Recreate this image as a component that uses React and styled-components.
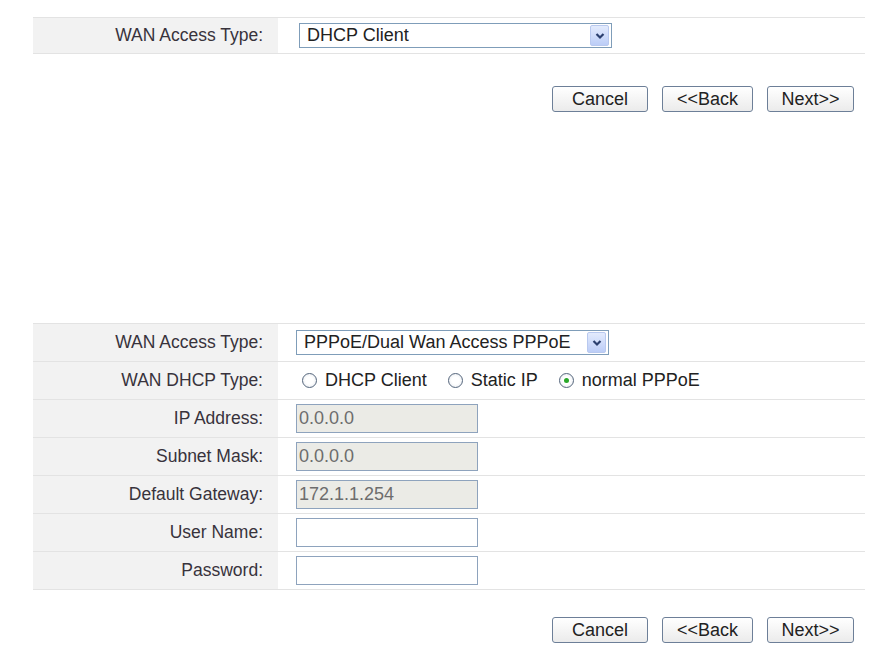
import React from 'react';
import styled, { createGlobalStyle } from 'styled-components';

const GlobalStyle = createGlobalStyle`
  body {
    margin: 0;
    background: #ffffff;
    font-family: "Liberation Sans", Arial, sans-serif;
    color: #333333;
  }
`;

const Page = styled.div`
  width: 890px;
  height: 646px;
  padding: 17px 25px 0 33px;
  box-sizing: border-box;
  display: flex;
  flex-direction: column;
`;

const FormTable = styled.div`
  display: flex;
  flex-direction: column;
  border-top: 1px solid #e3e3e3;
  margin-top: ${(p) => p.offset || 0}px;
`;

const Row = styled.div`
  display: grid;
  grid-template-columns: 245px 1fr;
  height: ${(p) => p.height || 37}px;
  border-bottom: 1px solid #e3e3e3;
`;

const Label = styled.div`
  background: #f2f2f2;
  display: flex;
  align-items: center;
  justify-content: flex-end;
  padding-right: 15px;
  font-size: 17.5px;
  color: #38333c;
`;

const Value = styled.div`
  display: flex;
  align-items: center;
  padding-left: ${(p) => p.indent || 18}px;
  gap: 21px;
  font-size: 18px;
`;

const Select = styled.div`
  width: ${(p) => p.width}px;
  height: 25px;
  box-sizing: border-box;
  border: 1px solid #7f9db9;
  background: #ffffff;
  display: flex;
  align-items: center;
  justify-content: space-between;
  padding: 0 2px 0 7px;
  font-size: 18px;
  color: #222222;
`;

const DropButton = styled.span`
  width: 19px;
  height: 21px;
  box-sizing: border-box;
  border: 1px solid #b9c9ef;
  border-radius: 2px;
  background: linear-gradient(#e3ebfd, #bccdf7);
  display: flex;
  align-items: center;
  justify-content: center;
`;

const Field = styled.div`
  width: 182px;
  height: 29px;
  box-sizing: border-box;
  border: 1px solid #8ea3bd;
  background: ${(p) => (p.disabled ? '#ebebe6' : '#ffffff')};
  color: #6d6d6d;
  font-size: 18px;
  display: flex;
  align-items: center;
  padding-left: 2px;
`;

const RadioOption = styled.label`
  display: flex;
  align-items: center;
  gap: 8px;
  font-size: 18px;
  color: #222222;
`;

const RadioMark = styled.span`
  width: 15px;
  height: 15px;
  box-sizing: border-box;
  border-radius: 50%;
  border: 1px solid #55667c;
  background: radial-gradient(circle, #ffffff 40%, #e2e6ec 100%);
  display: flex;
  align-items: center;
  justify-content: center;

  &::after {
    content: '';
    width: 5px;
    height: 5px;
    border-radius: 50%;
    background: ${(p) => (p.checked ? '#2aa82a' : 'transparent')};
  }
`;

const ButtonBar = styled.div`
  display: flex;
  justify-content: flex-end;
  gap: 14px;
  padding-right: 11px;
  margin-top: ${(p) => p.offset || 0}px;
`;

const Button = styled.button`
  height: 26px;
  width: ${(p) => p.width}px;
  box-sizing: border-box;
  border: 1px solid #6d7f98;
  border-radius: 3px;
  background: linear-gradient(#ffffff, #ebebeb);
  font-family: "Liberation Sans", Arial, sans-serif;
  font-size: 18px;
  color: #222222;
  padding: 0;
`;

const Chevron = () => (
  <svg width="10" height="8" viewBox="0 0 10 8">
    <path d="M1.5 2 L5 5.5 L8.5 2" fill="none" stroke="#2b3f6e" strokeWidth="2.2" />
  </svg>
);

const Buttons = ({ offset }) => (
  <ButtonBar offset={offset}>
    <Button width={96}>Cancel</Button>
    <Button width={91}>&lt;&lt;Back</Button>
    <Button width={87}>Next&gt;&gt;</Button>
  </ButtonBar>
);

const App = () => {
  const fields = [
    { label: 'IP Address:', value: '0.0.0.0', disabled: true },
    { label: 'Subnet Mask:', value: '0.0.0.0', disabled: true },
    { label: 'Default Gateway:', value: '172.1.1.254', disabled: true },
    { label: 'User Name:', value: '', disabled: false },
    { label: 'Password:', value: '', disabled: false },
  ];

  return (
    <Page>
      <GlobalStyle />
      <FormTable>
        <Row height={35}>
          <Label>WAN Access Type:</Label>
          <Value indent={21}>
            <Select width={313}>
              DHCP Client
              <DropButton><Chevron /></DropButton>
            </Select>
          </Value>
        </Row>
      </FormTable>
      <Buttons offset={32} />

      <FormTable offset={211}>
        <Row>
          <Label>WAN Access Type:</Label>
          <Value>
            <Select width={313}>
              PPPoE/Dual Wan Access PPPoE
              <DropButton><Chevron /></DropButton>
            </Select>
          </Value>
        </Row>
        <Row>
          <Label>WAN DHCP Type:</Label>
          <Value indent={24}>
            <RadioOption><RadioMark />DHCP Client</RadioOption>
            <RadioOption><RadioMark />Static IP</RadioOption>
            <RadioOption><RadioMark checked />normal PPPoE</RadioOption>
          </Value>
        </Row>
        {fields.map((f) => (
          <Row key={f.label}>
            <Label>{f.label}</Label>
            <Value>
              <Field disabled={f.disabled}>{f.value}</Field>
            </Value>
          </Row>
        ))}
      </FormTable>
      <Buttons offset={27} />
    </Page>
  );
};

export default App;
